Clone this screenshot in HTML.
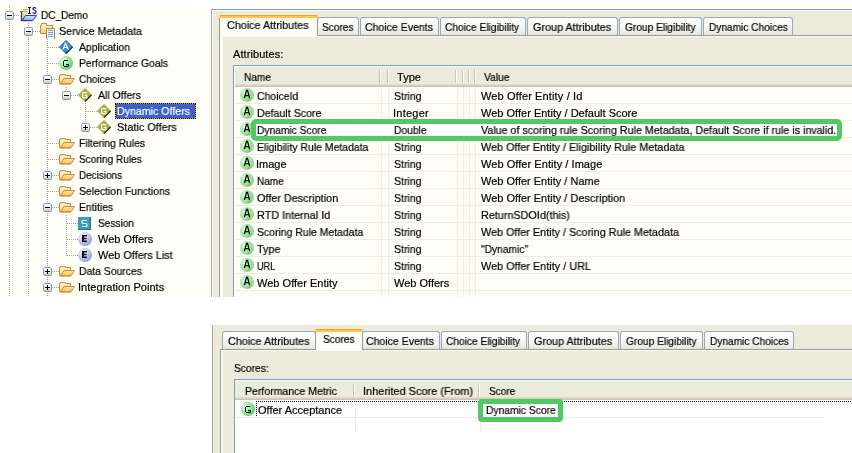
<!DOCTYPE html><html><head><meta charset="utf-8"><style>
html,body{margin:0;padding:0}
body{width:852px;height:453px;overflow:hidden;background:#fff;position:relative;font-family:"Liberation Sans",sans-serif;font-size:11px;color:#000}
.a{position:absolute}
.t{position:absolute;white-space:pre;line-height:13px;font-size:11px;will-change:transform;-webkit-text-stroke-width:0.2px}
svg.a{overflow:visible}
</style></head><body>
<div class="a" style="left:0px;top:4px;width:194px;height:293px;background:#FFFFF7;"></div>
<div class="a" style="left:194px;top:9px;width:17px;height:288px;background:#FFFFF7;"></div>
<div class="a" style="left:9px;top:5px;width:1px;height:292px;background:repeating-linear-gradient(to bottom,#A3A3A3 0 1px,transparent 1px 2px);"></div>
<div class="a" style="left:28px;top:23px;width:1px;height:274px;background:repeating-linear-gradient(to bottom,#A3A3A3 0 1px,transparent 1px 2px);"></div>
<div class="a" style="left:47px;top:39px;width:1px;height:258px;background:repeating-linear-gradient(to bottom,#A3A3A3 0 1px,transparent 1px 2px);"></div>
<div class="a" style="left:66px;top:87px;width:1px;height:9px;background:repeating-linear-gradient(to bottom,#A3A3A3 0 1px,transparent 1px 2px);"></div>
<div class="a" style="left:85px;top:103px;width:1px;height:25px;background:repeating-linear-gradient(to bottom,#A3A3A3 0 1px,transparent 1px 2px);"></div>
<div class="a" style="left:66px;top:215px;width:1px;height:41px;background:repeating-linear-gradient(to bottom,#A3A3A3 0 1px,transparent 1px 2px);"></div>
<div class="a" style="left:14px;top:15px;width:6px;height:1px;background:repeating-linear-gradient(to right,#A3A3A3 0 1px,transparent 1px 2px);"></div>
<div class="a" style="left:33px;top:31px;width:7px;height:1px;background:repeating-linear-gradient(to right,#A3A3A3 0 1px,transparent 1px 2px);"></div>
<div class="a" style="left:48px;top:47px;width:11px;height:1px;background:repeating-linear-gradient(to right,#A3A3A3 0 1px,transparent 1px 2px);"></div>
<div class="a" style="left:48px;top:63px;width:11px;height:1px;background:repeating-linear-gradient(to right,#A3A3A3 0 1px,transparent 1px 2px);"></div>
<div class="a" style="left:52px;top:79px;width:7px;height:1px;background:repeating-linear-gradient(to right,#A3A3A3 0 1px,transparent 1px 2px);"></div>
<div class="a" style="left:71px;top:95px;width:7px;height:1px;background:repeating-linear-gradient(to right,#A3A3A3 0 1px,transparent 1px 2px);"></div>
<div class="a" style="left:86px;top:111px;width:11px;height:1px;background:repeating-linear-gradient(to right,#A3A3A3 0 1px,transparent 1px 2px);"></div>
<div class="a" style="left:90px;top:127px;width:7px;height:1px;background:repeating-linear-gradient(to right,#A3A3A3 0 1px,transparent 1px 2px);"></div>
<div class="a" style="left:48px;top:143px;width:11px;height:1px;background:repeating-linear-gradient(to right,#A3A3A3 0 1px,transparent 1px 2px);"></div>
<div class="a" style="left:48px;top:159px;width:11px;height:1px;background:repeating-linear-gradient(to right,#A3A3A3 0 1px,transparent 1px 2px);"></div>
<div class="a" style="left:52px;top:175px;width:7px;height:1px;background:repeating-linear-gradient(to right,#A3A3A3 0 1px,transparent 1px 2px);"></div>
<div class="a" style="left:48px;top:191px;width:11px;height:1px;background:repeating-linear-gradient(to right,#A3A3A3 0 1px,transparent 1px 2px);"></div>
<div class="a" style="left:52px;top:207px;width:7px;height:1px;background:repeating-linear-gradient(to right,#A3A3A3 0 1px,transparent 1px 2px);"></div>
<div class="a" style="left:67px;top:223px;width:11px;height:1px;background:repeating-linear-gradient(to right,#A3A3A3 0 1px,transparent 1px 2px);"></div>
<div class="a" style="left:67px;top:239px;width:11px;height:1px;background:repeating-linear-gradient(to right,#A3A3A3 0 1px,transparent 1px 2px);"></div>
<div class="a" style="left:67px;top:255px;width:11px;height:1px;background:repeating-linear-gradient(to right,#A3A3A3 0 1px,transparent 1px 2px);"></div>
<div class="a" style="left:52px;top:271px;width:7px;height:1px;background:repeating-linear-gradient(to right,#A3A3A3 0 1px,transparent 1px 2px);"></div>
<div class="a" style="left:52px;top:287px;width:7px;height:1px;background:repeating-linear-gradient(to right,#A3A3A3 0 1px,transparent 1px 2px);"></div>
<svg class="a" style="left:5px;top:11px;" width="9" height="9" viewBox="0 0 9 9"><defs><linearGradient id="bgm" x1="0" y1="0" x2="0" y2="1"><stop offset="0" stop-color="#fff"/><stop offset="0.5" stop-color="#F6F4EE"/><stop offset="1" stop-color="#C6BDA2"/></linearGradient></defs><rect x="0.5" y="0.5" width="8" height="8" rx="1.2" fill="url(#bgm)" stroke="#7E9EBE"/><rect x="2" y="4" width="5" height="1" fill="#000"/></svg>
<svg class="a" style="left:19px;top:6px;" width="18" height="16" viewBox="0 0 18 16">
<defs><linearGradient id="isf" x1="0" y1="0" x2="0" y2="1"><stop offset="0" stop-color="#FFF2C8"/><stop offset="1" stop-color="#F4C65A"/></linearGradient>
<linearGradient id="isb" x1="0" y1="0" x2="0" y2="1"><stop offset="0" stop-color="#C8E8FF"/><stop offset="1" stop-color="#8CC0EE"/></linearGradient></defs>
<rect x="2" y="3" width="7" height="11" fill="url(#isf)"/>
<path d="M4 3.5h5M4 5.5h5" stroke="#E0A868" stroke-width="1"/>
<path d="M1 5.5h3" stroke="#8A6E8C" stroke-width="1"/>
<path d="M2.5 6v8.5h10" stroke="#2233AA" stroke-width="1.3" fill="none"/>
<path d="M3.5 14.2 L6.5 9.5 H17.5 L14 14.5z" fill="url(#isb)" stroke="#2A3CB0" stroke-width="1"/>
<path d="M9 1.5h3M10.5 1.5v6M9 7.5h3" stroke="#15158A" stroke-width="1.1" fill="none"/>
<path d="M17 2.6 C16.5 1.4 14 1.2 13.9 2.8 C13.8 4.4 17.2 4.0 17.1 5.9 C17 7.8 14 7.8 13.6 6.4" stroke="#15158A" stroke-width="1.2" fill="none"/>
</svg>
<div class="t" style="left:40.50px;top:9px;transform:scaleX(0.9135);transform-origin:0 0;">DC_Demo</div>
<svg class="a" style="left:24px;top:27px;" width="9" height="9" viewBox="0 0 9 9"><defs><linearGradient id="bgm" x1="0" y1="0" x2="0" y2="1"><stop offset="0" stop-color="#fff"/><stop offset="0.5" stop-color="#F6F4EE"/><stop offset="1" stop-color="#C6BDA2"/></linearGradient></defs><rect x="0.5" y="0.5" width="8" height="8" rx="1.2" fill="url(#bgm)" stroke="#7E9EBE"/><rect x="2" y="4" width="5" height="1" fill="#000"/></svg>
<svg class="a" style="left:39px;top:23px;" width="17" height="17" viewBox="0 0 17 17">
<defs><linearGradient id="fd" x1="0" y1="0" x2="0" y2="1"><stop offset="0" stop-color="#FFF6D6"/><stop offset="1" stop-color="#F8CA6A"/></linearGradient></defs>
<path d="M1.5 10.5 V2.5 H2.5 V0.5 H7.5 V2.5 H13.5 V10.5z" fill="url(#fd)" stroke="#CF8A2C" stroke-width="1"/>
<rect x="7" y="5" width="9" height="11" fill="#F2F7FF"/><path d="M7.5 16 V5.5 H15.5 V16" fill="none" stroke="#A28A3C"/>
<rect x="9" y="7" width="5" height="1" fill="#7A98D8"/>
<rect x="9" y="9" width="5" height="1" fill="#7A98D8"/>
<rect x="9" y="11" width="5" height="1" fill="#7A98D8"/>
<rect x="9" y="13" width="5" height="1" fill="#7A98D8"/>
</svg>
<div class="t" style="left:59.40px;top:25px;transform:scaleX(0.9690);transform-origin:0 0;">Service Metadata</div>
<svg class="a" style="left:59px;top:40px;" width="14" height="14" viewBox="0 0 14 14">
<path d="M7 0.5 L13.5 7 L7 13.5 L0.5 7z" fill="#3399BB" stroke="#1E3CB4" stroke-width="1"/>
<path d="M13.5 7 L7 13.5" stroke="#1A2A70" stroke-width="1.2"/>
<path d="M3.8 9.8 L6.5 3.2 L9.5 9.8 M5.2 7.5 H8" stroke="#fff" stroke-width="1.1" fill="none"/>
</svg>
<div class="t" style="left:79.10px;top:41px;transform:scaleX(0.9479);transform-origin:0 0;">Application</div>
<svg class="a" style="left:59px;top:56px;" width="14" height="14" viewBox="0 0 14 14">
<defs><radialGradient id="g3" cx="0.32" cy="0.35" r="0.8"><stop offset="0" stop-color="#F2FFF2"/><stop offset="0.35" stop-color="#A8F0AC"/><stop offset="1" stop-color="#46CC5A"/></radialGradient></defs>
<circle cx="7" cy="7" r="7" fill="url(#g3)"/>
<path d="M5 4.5H9M4.5 5V10M5 10.5H9M9.5 8V10.5M7 8.5H10" stroke="#000" stroke-width="1" fill="none"/>
</svg>
<div class="t" style="left:79.10px;top:57px;transform:scaleX(0.9395);transform-origin:0 0;">Performance Goals</div>
<svg class="a" style="left:43px;top:75px;" width="9" height="9" viewBox="0 0 9 9"><defs><linearGradient id="bgm" x1="0" y1="0" x2="0" y2="1"><stop offset="0" stop-color="#fff"/><stop offset="0.5" stop-color="#F6F4EE"/><stop offset="1" stop-color="#C6BDA2"/></linearGradient></defs><rect x="0.5" y="0.5" width="8" height="8" rx="1.2" fill="url(#bgm)" stroke="#7E9EBE"/><rect x="2" y="4" width="5" height="1" fill="#000"/></svg>
<svg class="a" style="left:59px;top:74px;" width="16" height="11" viewBox="0 0 16 11">
<defs><linearGradient id="of" x1="0" y1="0" x2="0" y2="1"><stop offset="0" stop-color="#FFF6D2"/><stop offset="1" stop-color="#F9CF74"/></linearGradient>
<linearGradient id="off" x1="0" y1="0" x2="0" y2="1"><stop offset="0" stop-color="#FFE9A8"/><stop offset="1" stop-color="#F6C25E"/></linearGradient></defs>
<path d="M0.5 9.5 V1.5 H1.5 V0.5 H6.5 V1.5 H11.5 V4.5" fill="url(#of)" stroke="#D08C34" stroke-width="1"/>
<rect x="1" y="2" width="10" height="8" fill="url(#of)"/>
<path d="M0.5 1.5 V9.5" stroke="#D08C34"/>
<path d="M1.5 9.8 L5 4.5 H15.5 L12 9.8z" fill="url(#off)" stroke="#D08C34" stroke-width="1"/>
<path d="M1 10 H12" stroke="#D08C34" stroke-width="1"/>
</svg>
<div class="t" style="left:78.50px;top:73px;transform:scaleX(0.9170);transform-origin:0 0;">Choices</div>
<svg class="a" style="left:62px;top:91px;" width="9" height="9" viewBox="0 0 9 9"><defs><linearGradient id="bgm" x1="0" y1="0" x2="0" y2="1"><stop offset="0" stop-color="#fff"/><stop offset="0.5" stop-color="#F6F4EE"/><stop offset="1" stop-color="#C6BDA2"/></linearGradient></defs><rect x="0.5" y="0.5" width="8" height="8" rx="1.2" fill="url(#bgm)" stroke="#7E9EBE"/><rect x="2" y="4" width="5" height="1" fill="#000"/></svg>
<svg class="a" style="left:78px;top:88px;" width="14" height="14" viewBox="0 0 14 14">
<path d="M7 0.5 L13.5 7 L7 13.5 L0.5 7z" fill="#B5AA3A" stroke="#66BB30" stroke-width="0.9"/>
<path d="M13.5 7 L7 13.5" stroke="#2E2E10" stroke-width="1.2"/>
<path d="M5 4.5h4.2M4.6 4.8v5M5 9.6h4.2M8.8 7.2v2.6M6.8 7.3h2.4" stroke="#fff" stroke-width="1.25" fill="none"/>
</svg>
<div class="t" style="left:98.20px;top:89px;transform:scaleX(0.9554);transform-origin:0 0;">All Offers</div>
<svg class="a" style="left:97px;top:104px;" width="14" height="14" viewBox="0 0 14 14">
<path d="M7 0.5 L13.5 7 L7 13.5 L0.5 7z" fill="#B5AA3A" stroke="#66BB30" stroke-width="0.9"/>
<path d="M13.5 7 L7 13.5" stroke="#2E2E10" stroke-width="1.2"/>
<path d="M5 4.5h4.2M4.6 4.8v5M5 9.6h4.2M8.8 7.2v2.6M6.8 7.3h2.4" stroke="#fff" stroke-width="1.25" fill="none"/>
</svg>
<div class="a" style="left:115px;top:103px;width:81px;height:16px;background:#F0A030;outline:1px dotted #000;outline-offset:-1px;"></div>
<div class="a" style="left:116px;top:104px;width:79px;height:14px;background:#3B62C8;"></div>
<div class="t" style="left:116.70px;top:105px;color:#fff;transform:scaleX(0.9659);transform-origin:0 0;">Dynamic Offers</div>
<svg class="a" style="left:81px;top:123px;" width="9" height="9" viewBox="0 0 9 9"><defs><linearGradient id="bgp" x1="0" y1="0" x2="0" y2="1"><stop offset="0" stop-color="#fff"/><stop offset="0.5" stop-color="#F6F4EE"/><stop offset="1" stop-color="#C6BDA2"/></linearGradient></defs><rect x="0.5" y="0.5" width="8" height="8" rx="1.2" fill="url(#bgp)" stroke="#7E9EBE"/><rect x="2" y="4" width="5" height="1" fill="#000"/><rect x="4" y="2" width="1" height="5" fill="#000"/></svg>
<svg class="a" style="left:97px;top:120px;" width="14" height="14" viewBox="0 0 14 14">
<path d="M7 0.5 L13.5 7 L7 13.5 L0.5 7z" fill="#B5AA3A" stroke="#66BB30" stroke-width="0.9"/>
<path d="M13.5 7 L7 13.5" stroke="#2E2E10" stroke-width="1.2"/>
<path d="M5 4.5h4.2M4.6 4.8v5M5 9.6h4.2M8.8 7.2v2.6M6.8 7.3h2.4" stroke="#fff" stroke-width="1.25" fill="none"/>
</svg>
<div class="t" style="left:116.70px;top:121px;transform:scaleX(0.9915);transform-origin:0 0;">Static Offers</div>
<svg class="a" style="left:59px;top:138px;" width="16" height="11" viewBox="0 0 16 11">
<defs><linearGradient id="of" x1="0" y1="0" x2="0" y2="1"><stop offset="0" stop-color="#FFF6D2"/><stop offset="1" stop-color="#F9CF74"/></linearGradient>
<linearGradient id="off" x1="0" y1="0" x2="0" y2="1"><stop offset="0" stop-color="#FFE9A8"/><stop offset="1" stop-color="#F6C25E"/></linearGradient></defs>
<path d="M0.5 9.5 V1.5 H1.5 V0.5 H6.5 V1.5 H11.5 V4.5" fill="url(#of)" stroke="#D08C34" stroke-width="1"/>
<rect x="1" y="2" width="10" height="8" fill="url(#of)"/>
<path d="M0.5 1.5 V9.5" stroke="#D08C34"/>
<path d="M1.5 9.8 L5 4.5 H15.5 L12 9.8z" fill="url(#off)" stroke="#D08C34" stroke-width="1"/>
<path d="M1 10 H12" stroke="#D08C34" stroke-width="1"/>
</svg>
<div class="t" style="left:78.50px;top:137px;transform:scaleX(0.9392);transform-origin:0 0;">Filtering Rules</div>
<svg class="a" style="left:59px;top:154px;" width="16" height="11" viewBox="0 0 16 11">
<defs><linearGradient id="of" x1="0" y1="0" x2="0" y2="1"><stop offset="0" stop-color="#FFF6D2"/><stop offset="1" stop-color="#F9CF74"/></linearGradient>
<linearGradient id="off" x1="0" y1="0" x2="0" y2="1"><stop offset="0" stop-color="#FFE9A8"/><stop offset="1" stop-color="#F6C25E"/></linearGradient></defs>
<path d="M0.5 9.5 V1.5 H1.5 V0.5 H6.5 V1.5 H11.5 V4.5" fill="url(#of)" stroke="#D08C34" stroke-width="1"/>
<rect x="1" y="2" width="10" height="8" fill="url(#of)"/>
<path d="M0.5 1.5 V9.5" stroke="#D08C34"/>
<path d="M1.5 9.8 L5 4.5 H15.5 L12 9.8z" fill="url(#off)" stroke="#D08C34" stroke-width="1"/>
<path d="M1 10 H12" stroke="#D08C34" stroke-width="1"/>
</svg>
<div class="t" style="left:78.50px;top:153px;transform:scaleX(0.9163);transform-origin:0 0;">Scoring Rules</div>
<svg class="a" style="left:43px;top:171px;" width="9" height="9" viewBox="0 0 9 9"><defs><linearGradient id="bgp" x1="0" y1="0" x2="0" y2="1"><stop offset="0" stop-color="#fff"/><stop offset="0.5" stop-color="#F6F4EE"/><stop offset="1" stop-color="#C6BDA2"/></linearGradient></defs><rect x="0.5" y="0.5" width="8" height="8" rx="1.2" fill="url(#bgp)" stroke="#7E9EBE"/><rect x="2" y="4" width="5" height="1" fill="#000"/><rect x="4" y="2" width="1" height="5" fill="#000"/></svg>
<svg class="a" style="left:59px;top:170px;" width="16" height="11" viewBox="0 0 16 11">
<defs><linearGradient id="of" x1="0" y1="0" x2="0" y2="1"><stop offset="0" stop-color="#FFF6D2"/><stop offset="1" stop-color="#F9CF74"/></linearGradient>
<linearGradient id="off" x1="0" y1="0" x2="0" y2="1"><stop offset="0" stop-color="#FFE9A8"/><stop offset="1" stop-color="#F6C25E"/></linearGradient></defs>
<path d="M0.5 9.5 V1.5 H1.5 V0.5 H6.5 V1.5 H11.5 V4.5" fill="url(#of)" stroke="#D08C34" stroke-width="1"/>
<rect x="1" y="2" width="10" height="8" fill="url(#of)"/>
<path d="M0.5 1.5 V9.5" stroke="#D08C34"/>
<path d="M1.5 9.8 L5 4.5 H15.5 L12 9.8z" fill="url(#off)" stroke="#D08C34" stroke-width="1"/>
<path d="M1 10 H12" stroke="#D08C34" stroke-width="1"/>
</svg>
<div class="t" style="left:78.50px;top:169px;transform:scaleX(0.9028);transform-origin:0 0;">Decisions</div>
<svg class="a" style="left:59px;top:186px;" width="16" height="11" viewBox="0 0 16 11">
<defs><linearGradient id="of" x1="0" y1="0" x2="0" y2="1"><stop offset="0" stop-color="#FFF6D2"/><stop offset="1" stop-color="#F9CF74"/></linearGradient>
<linearGradient id="off" x1="0" y1="0" x2="0" y2="1"><stop offset="0" stop-color="#FFE9A8"/><stop offset="1" stop-color="#F6C25E"/></linearGradient></defs>
<path d="M0.5 9.5 V1.5 H1.5 V0.5 H6.5 V1.5 H11.5 V4.5" fill="url(#of)" stroke="#D08C34" stroke-width="1"/>
<rect x="1" y="2" width="10" height="8" fill="url(#of)"/>
<path d="M0.5 1.5 V9.5" stroke="#D08C34"/>
<path d="M1.5 9.8 L5 4.5 H15.5 L12 9.8z" fill="url(#off)" stroke="#D08C34" stroke-width="1"/>
<path d="M1 10 H12" stroke="#D08C34" stroke-width="1"/>
</svg>
<div class="t" style="left:78.50px;top:185px;transform:scaleX(0.9482);transform-origin:0 0;">Selection Functions</div>
<svg class="a" style="left:43px;top:203px;" width="9" height="9" viewBox="0 0 9 9"><defs><linearGradient id="bgm" x1="0" y1="0" x2="0" y2="1"><stop offset="0" stop-color="#fff"/><stop offset="0.5" stop-color="#F6F4EE"/><stop offset="1" stop-color="#C6BDA2"/></linearGradient></defs><rect x="0.5" y="0.5" width="8" height="8" rx="1.2" fill="url(#bgm)" stroke="#7E9EBE"/><rect x="2" y="4" width="5" height="1" fill="#000"/></svg>
<svg class="a" style="left:59px;top:202px;" width="16" height="11" viewBox="0 0 16 11">
<defs><linearGradient id="of" x1="0" y1="0" x2="0" y2="1"><stop offset="0" stop-color="#FFF6D2"/><stop offset="1" stop-color="#F9CF74"/></linearGradient>
<linearGradient id="off" x1="0" y1="0" x2="0" y2="1"><stop offset="0" stop-color="#FFE9A8"/><stop offset="1" stop-color="#F6C25E"/></linearGradient></defs>
<path d="M0.5 9.5 V1.5 H1.5 V0.5 H6.5 V1.5 H11.5 V4.5" fill="url(#of)" stroke="#D08C34" stroke-width="1"/>
<rect x="1" y="2" width="10" height="8" fill="url(#of)"/>
<path d="M0.5 1.5 V9.5" stroke="#D08C34"/>
<path d="M1.5 9.8 L5 4.5 H15.5 L12 9.8z" fill="url(#off)" stroke="#D08C34" stroke-width="1"/>
<path d="M1 10 H12" stroke="#D08C34" stroke-width="1"/>
</svg>
<div class="t" style="left:78.60px;top:201px;transform:scaleX(0.9461);transform-origin:0 0;">Entities</div>
<svg class="a" style="left:78px;top:217px;" width="13" height="13" viewBox="0 0 13 13">
<rect x="0" y="0" width="13" height="13" fill="#3A9BBA"/>
<path d="M12.5 0 V12.5 H0" stroke="#2A6E8E" stroke-width="1" fill="none"/>
<path d="M9 3.5 H5 Q4 3.5 4 4.5 V5.5 Q4 6.5 5 6.5 H8 Q9 6.5 9 7.5 V8.5 Q9 9.5 8 9.5 H4" stroke="#fff" stroke-width="1.1" fill="none"/>
</svg>
<div class="t" style="left:97.60px;top:217px;transform:scaleX(0.9176);transform-origin:0 0;">Session</div>
<svg class="a" style="left:78px;top:232px;" width="14" height="14" viewBox="0 0 14 14">
<defs><radialGradient id="e14" cx="0.35" cy="0.3" r="0.8"><stop offset="0" stop-color="#F4F6FF"/><stop offset="0.5" stop-color="#C4CAF2"/><stop offset="1" stop-color="#8890D6"/></radialGradient></defs>
<circle cx="7" cy="7" r="7" fill="url(#e14)"/>
<rect x="4" y="3" width="2" height="7" fill="#000"/><rect x="4" y="3" width="5" height="1.4" fill="#000"/><rect x="4" y="5.9" width="4.6" height="1.3" fill="#000"/><rect x="4" y="8.6" width="5" height="1.4" fill="#000"/>
</svg>
<div class="t" style="left:97.60px;top:233px;transform:scaleX(0.9995);transform-origin:0 0;">Web Offers</div>
<svg class="a" style="left:78px;top:248px;" width="14" height="14" viewBox="0 0 14 14">
<defs><radialGradient id="e15" cx="0.35" cy="0.3" r="0.8"><stop offset="0" stop-color="#F4F6FF"/><stop offset="0.5" stop-color="#C4CAF2"/><stop offset="1" stop-color="#8890D6"/></radialGradient></defs>
<circle cx="7" cy="7" r="7" fill="url(#e15)"/>
<rect x="4" y="3" width="2" height="7" fill="#000"/><rect x="4" y="3" width="5" height="1.4" fill="#000"/><rect x="4" y="5.9" width="4.6" height="1.3" fill="#000"/><rect x="4" y="8.6" width="5" height="1.4" fill="#000"/>
</svg>
<div class="t" style="left:97.60px;top:249px;transform:scaleX(0.9915);transform-origin:0 0;">Web Offers List</div>
<svg class="a" style="left:43px;top:267px;" width="9" height="9" viewBox="0 0 9 9"><defs><linearGradient id="bgp" x1="0" y1="0" x2="0" y2="1"><stop offset="0" stop-color="#fff"/><stop offset="0.5" stop-color="#F6F4EE"/><stop offset="1" stop-color="#C6BDA2"/></linearGradient></defs><rect x="0.5" y="0.5" width="8" height="8" rx="1.2" fill="url(#bgp)" stroke="#7E9EBE"/><rect x="2" y="4" width="5" height="1" fill="#000"/><rect x="4" y="2" width="1" height="5" fill="#000"/></svg>
<svg class="a" style="left:59px;top:266px;" width="16" height="11" viewBox="0 0 16 11">
<defs><linearGradient id="of" x1="0" y1="0" x2="0" y2="1"><stop offset="0" stop-color="#FFF6D2"/><stop offset="1" stop-color="#F9CF74"/></linearGradient>
<linearGradient id="off" x1="0" y1="0" x2="0" y2="1"><stop offset="0" stop-color="#FFE9A8"/><stop offset="1" stop-color="#F6C25E"/></linearGradient></defs>
<path d="M0.5 9.5 V1.5 H1.5 V0.5 H6.5 V1.5 H11.5 V4.5" fill="url(#of)" stroke="#D08C34" stroke-width="1"/>
<rect x="1" y="2" width="10" height="8" fill="url(#of)"/>
<path d="M0.5 1.5 V9.5" stroke="#D08C34"/>
<path d="M1.5 9.8 L5 4.5 H15.5 L12 9.8z" fill="url(#off)" stroke="#D08C34" stroke-width="1"/>
<path d="M1 10 H12" stroke="#D08C34" stroke-width="1"/>
</svg>
<div class="t" style="left:78.60px;top:265px;transform:scaleX(0.9442);transform-origin:0 0;">Data Sources</div>
<svg class="a" style="left:43px;top:283px;" width="9" height="9" viewBox="0 0 9 9"><defs><linearGradient id="bgp" x1="0" y1="0" x2="0" y2="1"><stop offset="0" stop-color="#fff"/><stop offset="0.5" stop-color="#F6F4EE"/><stop offset="1" stop-color="#C6BDA2"/></linearGradient></defs><rect x="0.5" y="0.5" width="8" height="8" rx="1.2" fill="url(#bgp)" stroke="#7E9EBE"/><rect x="2" y="4" width="5" height="1" fill="#000"/><rect x="4" y="2" width="1" height="5" fill="#000"/></svg>
<svg class="a" style="left:59px;top:282px;" width="16" height="11" viewBox="0 0 16 11">
<defs><linearGradient id="of" x1="0" y1="0" x2="0" y2="1"><stop offset="0" stop-color="#FFF6D2"/><stop offset="1" stop-color="#F9CF74"/></linearGradient>
<linearGradient id="off" x1="0" y1="0" x2="0" y2="1"><stop offset="0" stop-color="#FFE9A8"/><stop offset="1" stop-color="#F6C25E"/></linearGradient></defs>
<path d="M0.5 9.5 V1.5 H1.5 V0.5 H6.5 V1.5 H11.5 V4.5" fill="url(#of)" stroke="#D08C34" stroke-width="1"/>
<rect x="1" y="2" width="10" height="8" fill="url(#of)"/>
<path d="M0.5 1.5 V9.5" stroke="#D08C34"/>
<path d="M1.5 9.8 L5 4.5 H15.5 L12 9.8z" fill="url(#off)" stroke="#D08C34" stroke-width="1"/>
<path d="M1 10 H12" stroke="#D08C34" stroke-width="1"/>
</svg>
<div class="t" style="left:77.60px;top:281px;letter-spacing:0.035px;">Integration Points</div>
<div class="a" style="left:262px;top:4px;width:590px;height:5px;background:#FFFFF4;"></div>
<div class="a" style="left:211px;top:9px;width:641px;height:1px;background:#7F9DB9;"></div>
<div class="a" style="left:211px;top:9px;width:1px;height:288px;background:#A5A597;"></div>
<div class="a" style="left:212px;top:10px;width:640px;height:287px;background:#fff;"></div>
<div class="a" style="left:213px;top:11px;width:639px;height:286px;background:#ECEBDB;"></div>
<div class="a" style="left:219px;top:35px;width:633px;height:1px;background:#919B9C;"></div>
<div class="a" style="left:219px;top:35px;width:1px;height:262px;background:#919B9C;"></div>
<div class="a" style="left:220px;top:36px;width:632px;height:261px;background:#FCFCF6;"></div>
<div class="a" style="left:317px;top:17px;width:40px;height:17px;border:1px solid #98A8BA;border-bottom:none;border-radius:3px 3px 0 0;background:linear-gradient(#FFFFFF,#F5F5F0 60%,#E6E5DC);"></div>
<div class="t" style="left:321.50px;top:21px;transform:scaleX(0.9213);transform-origin:0 0;">Scores</div>
<div class="a" style="left:360px;top:17px;width:77px;height:17px;border:1px solid #98A8BA;border-bottom:none;border-radius:3px 3px 0 0;background:linear-gradient(#FFFFFF,#F5F5F0 60%,#E6E5DC);"></div>
<div class="t" style="left:365.10px;top:21px;transform:scaleX(0.9576);transform-origin:0 0;">Choice Events</div>
<div class="a" style="left:440px;top:17px;width:84px;height:17px;border:1px solid #98A8BA;border-bottom:none;border-radius:3px 3px 0 0;background:linear-gradient(#FFFFFF,#F5F5F0 60%,#E6E5DC);"></div>
<div class="t" style="left:445.30px;top:21px;transform:scaleX(0.9257);transform-origin:0 0;">Choice Eligibility</div>
<div class="a" style="left:527px;top:17px;width:89px;height:17px;border:1px solid #98A8BA;border-bottom:none;border-radius:3px 3px 0 0;background:linear-gradient(#FFFFFF,#F5F5F0 60%,#E6E5DC);"></div>
<div class="t" style="left:533.00px;top:21px;transform:scaleX(0.9827);transform-origin:0 0;">Group Attributes</div>
<div class="a" style="left:619px;top:17px;width:81px;height:17px;border:1px solid #98A8BA;border-bottom:none;border-radius:3px 3px 0 0;background:linear-gradient(#FFFFFF,#F5F5F0 60%,#E6E5DC);"></div>
<div class="t" style="left:624.60px;top:21px;transform:scaleX(0.9230);transform-origin:0 0;">Group Eligibility</div>
<div class="a" style="left:703px;top:17px;width:88px;height:17px;border:1px solid #98A8BA;border-bottom:none;border-radius:3px 3px 0 0;background:linear-gradient(#FFFFFF,#F5F5F0 60%,#E6E5DC);"></div>
<div class="t" style="left:708.70px;top:21px;transform:scaleX(0.9212);transform-origin:0 0;">Dynamic Choices</div>
<div class="a" style="left:219px;top:18px;width:97px;height:18px;border:1px solid #919B9C;border-top:none;border-bottom:none;background:#FCFCF6;"></div>
<div class="a" style="left:219px;top:15px;width:99px;height:3px;background:linear-gradient(#E68B2C,#FFC73C 50%,#FFC73C);border-radius:2px 2px 0 0;"></div>
<div class="t" style="left:226.50px;top:19px;transform:scaleX(0.9803);transform-origin:0 0;">Choice Attributes</div>
<div class="a" style="left:223px;top:37px;width:629px;height:260px;background:#ECEBDB;"></div>
<div class="t" style="left:233.10px;top:48px;letter-spacing:0.083px;">Attributes:</div>
<div class="a" style="left:233px;top:65px;width:619px;height:1px;background:#7F9DB9;"></div>
<div class="a" style="left:233px;top:65px;width:1px;height:232px;background:#7F9DB9;"></div>
<div class="a" style="left:234px;top:66px;width:618px;height:231px;background:#fff;"></div>
<div class="a" style="left:235px;top:67px;width:617px;height:17px;background:#EBEBDC;"></div>
<div class="a" style="left:235px;top:84px;width:617px;height:1px;background:#E4DBCC;"></div>
<div class="a" style="left:235px;top:85px;width:617px;height:1px;background:#D7CFC5;"></div>
<div class="a" style="left:235px;top:86px;width:617px;height:1px;background:#CAC2B6;"></div>
<div class="a" style="left:235px;top:87px;width:617px;height:210px;background:#FEFEF6;"></div>
<div class="a" style="left:379px;top:70px;width:1px;height:13px;background:#C7C5B2;"></div>
<div class="a" style="left:380px;top:70px;width:1px;height:13px;background:#FFFFFF;"></div>
<div class="a" style="left:387px;top:70px;width:1px;height:13px;background:#C7C5B2;"></div>
<div class="a" style="left:388px;top:70px;width:1px;height:13px;background:#FFFFFF;"></div>
<div class="a" style="left:455px;top:70px;width:1px;height:13px;background:#C7C5B2;"></div>
<div class="a" style="left:456px;top:70px;width:1px;height:13px;background:#FFFFFF;"></div>
<div class="a" style="left:462px;top:70px;width:1px;height:13px;background:#C7C5B2;"></div>
<div class="a" style="left:463px;top:70px;width:1px;height:13px;background:#FFFFFF;"></div>
<div class="a" style="left:468px;top:70px;width:1px;height:13px;background:#C7C5B2;"></div>
<div class="a" style="left:469px;top:70px;width:1px;height:13px;background:#FFFFFF;"></div>
<div class="a" style="left:474px;top:70px;width:1px;height:13px;background:#C7C5B2;"></div>
<div class="a" style="left:475px;top:70px;width:1px;height:13px;background:#FFFFFF;"></div>
<div class="t" style="left:243.60px;top:71px;transform:scaleX(0.9170);transform-origin:0 0;">Name</div>
<div class="t" style="left:397.20px;top:71px;letter-spacing:0.023px;">Type</div>
<div class="t" style="left:483.70px;top:71px;transform:scaleX(0.9338);transform-origin:0 0;">Value</div>
<div class="a" style="left:235px;top:103px;width:617px;height:1px;background:#EFEDE0;"></div>
<div class="a" style="left:235px;top:120px;width:617px;height:1px;background:#EFEDE0;"></div>
<div class="a" style="left:235px;top:137px;width:617px;height:1px;background:#EFEDE0;"></div>
<div class="a" style="left:235px;top:154px;width:617px;height:1px;background:#EFEDE0;"></div>
<div class="a" style="left:235px;top:171px;width:617px;height:1px;background:#EFEDE0;"></div>
<div class="a" style="left:235px;top:188px;width:617px;height:1px;background:#EFEDE0;"></div>
<div class="a" style="left:235px;top:205px;width:617px;height:1px;background:#EFEDE0;"></div>
<div class="a" style="left:235px;top:222px;width:617px;height:1px;background:#EFEDE0;"></div>
<div class="a" style="left:235px;top:239px;width:617px;height:1px;background:#EFEDE0;"></div>
<div class="a" style="left:235px;top:256px;width:617px;height:1px;background:#EFEDE0;"></div>
<div class="a" style="left:235px;top:273px;width:617px;height:1px;background:#EFEDE0;"></div>
<div class="a" style="left:235px;top:290px;width:617px;height:1px;background:#EFEDE0;"></div>
<div class="a" style="left:381px;top:87px;width:1px;height:210px;background:#EFEDE0;"></div>
<div class="a" style="left:388px;top:87px;width:1px;height:210px;background:#EFEDE0;"></div>
<div class="a" style="left:457px;top:87px;width:1px;height:210px;background:#EFEDE0;"></div>
<div class="a" style="left:463px;top:87px;width:1px;height:210px;background:#EFEDE0;"></div>
<div class="a" style="left:469px;top:87px;width:1px;height:210px;background:#EFEDE0;"></div>
<div class="a" style="left:475px;top:87px;width:1px;height:210px;background:#EFEDE0;"></div>
<svg class="a" style="left:240px;top:88px;" width="14" height="14" viewBox="0 0 14 14">
<defs><radialGradient id="a0" cx="0.35" cy="0.35" r="0.8"><stop offset="0" stop-color="#E8FFE8"/><stop offset="0.4" stop-color="#A6EAA8"/><stop offset="1" stop-color="#78D47E"/></radialGradient></defs>
<circle cx="7" cy="7" r="7" fill="url(#a0)"/>
<path d="M10.5 10.5 A5 5 0 0 1 7.5 12.5" stroke="#9AAA40" stroke-width="1.2" fill="none"/>
<path d="M4.4 10 L6.5 2.4 H7.5 L9.6 10 M5.4 7.6 H8.6" stroke="#000" stroke-width="1.25" fill="none"/>
</svg>
<svg class="a" style="left:240px;top:105px;" width="14" height="14" viewBox="0 0 14 14">
<defs><radialGradient id="a1" cx="0.35" cy="0.35" r="0.8"><stop offset="0" stop-color="#E8FFE8"/><stop offset="0.4" stop-color="#A6EAA8"/><stop offset="1" stop-color="#78D47E"/></radialGradient></defs>
<circle cx="7" cy="7" r="7" fill="url(#a1)"/>
<path d="M10.5 10.5 A5 5 0 0 1 7.5 12.5" stroke="#9AAA40" stroke-width="1.2" fill="none"/>
<path d="M4.4 10 L6.5 2.4 H7.5 L9.6 10 M5.4 7.6 H8.6" stroke="#000" stroke-width="1.25" fill="none"/>
</svg>
<svg class="a" style="left:240px;top:122px;" width="14" height="14" viewBox="0 0 14 14">
<defs><radialGradient id="a2" cx="0.35" cy="0.35" r="0.8"><stop offset="0" stop-color="#E8FFE8"/><stop offset="0.4" stop-color="#A6EAA8"/><stop offset="1" stop-color="#78D47E"/></radialGradient></defs>
<circle cx="7" cy="7" r="7" fill="url(#a2)"/>
<path d="M10.5 10.5 A5 5 0 0 1 7.5 12.5" stroke="#9AAA40" stroke-width="1.2" fill="none"/>
<path d="M4.4 10 L6.5 2.4 H7.5 L9.6 10 M5.4 7.6 H8.6" stroke="#000" stroke-width="1.25" fill="none"/>
</svg>
<svg class="a" style="left:240px;top:139px;" width="14" height="14" viewBox="0 0 14 14">
<defs><radialGradient id="a3" cx="0.35" cy="0.35" r="0.8"><stop offset="0" stop-color="#E8FFE8"/><stop offset="0.4" stop-color="#A6EAA8"/><stop offset="1" stop-color="#78D47E"/></radialGradient></defs>
<circle cx="7" cy="7" r="7" fill="url(#a3)"/>
<path d="M10.5 10.5 A5 5 0 0 1 7.5 12.5" stroke="#9AAA40" stroke-width="1.2" fill="none"/>
<path d="M4.4 10 L6.5 2.4 H7.5 L9.6 10 M5.4 7.6 H8.6" stroke="#000" stroke-width="1.25" fill="none"/>
</svg>
<svg class="a" style="left:240px;top:156px;" width="14" height="14" viewBox="0 0 14 14">
<defs><radialGradient id="a4" cx="0.35" cy="0.35" r="0.8"><stop offset="0" stop-color="#E8FFE8"/><stop offset="0.4" stop-color="#A6EAA8"/><stop offset="1" stop-color="#78D47E"/></radialGradient></defs>
<circle cx="7" cy="7" r="7" fill="url(#a4)"/>
<path d="M10.5 10.5 A5 5 0 0 1 7.5 12.5" stroke="#9AAA40" stroke-width="1.2" fill="none"/>
<path d="M4.4 10 L6.5 2.4 H7.5 L9.6 10 M5.4 7.6 H8.6" stroke="#000" stroke-width="1.25" fill="none"/>
</svg>
<svg class="a" style="left:240px;top:173px;" width="14" height="14" viewBox="0 0 14 14">
<defs><radialGradient id="a5" cx="0.35" cy="0.35" r="0.8"><stop offset="0" stop-color="#E8FFE8"/><stop offset="0.4" stop-color="#A6EAA8"/><stop offset="1" stop-color="#78D47E"/></radialGradient></defs>
<circle cx="7" cy="7" r="7" fill="url(#a5)"/>
<path d="M10.5 10.5 A5 5 0 0 1 7.5 12.5" stroke="#9AAA40" stroke-width="1.2" fill="none"/>
<path d="M4.4 10 L6.5 2.4 H7.5 L9.6 10 M5.4 7.6 H8.6" stroke="#000" stroke-width="1.25" fill="none"/>
</svg>
<svg class="a" style="left:240px;top:190px;" width="14" height="14" viewBox="0 0 14 14">
<defs><radialGradient id="a6" cx="0.35" cy="0.35" r="0.8"><stop offset="0" stop-color="#E8FFE8"/><stop offset="0.4" stop-color="#A6EAA8"/><stop offset="1" stop-color="#78D47E"/></radialGradient></defs>
<circle cx="7" cy="7" r="7" fill="url(#a6)"/>
<path d="M10.5 10.5 A5 5 0 0 1 7.5 12.5" stroke="#9AAA40" stroke-width="1.2" fill="none"/>
<path d="M4.4 10 L6.5 2.4 H7.5 L9.6 10 M5.4 7.6 H8.6" stroke="#000" stroke-width="1.25" fill="none"/>
</svg>
<svg class="a" style="left:240px;top:207px;" width="14" height="14" viewBox="0 0 14 14">
<defs><radialGradient id="a7" cx="0.35" cy="0.35" r="0.8"><stop offset="0" stop-color="#E8FFE8"/><stop offset="0.4" stop-color="#A6EAA8"/><stop offset="1" stop-color="#78D47E"/></radialGradient></defs>
<circle cx="7" cy="7" r="7" fill="url(#a7)"/>
<path d="M10.5 10.5 A5 5 0 0 1 7.5 12.5" stroke="#9AAA40" stroke-width="1.2" fill="none"/>
<path d="M4.4 10 L6.5 2.4 H7.5 L9.6 10 M5.4 7.6 H8.6" stroke="#000" stroke-width="1.25" fill="none"/>
</svg>
<svg class="a" style="left:240px;top:224px;" width="14" height="14" viewBox="0 0 14 14">
<defs><radialGradient id="a8" cx="0.35" cy="0.35" r="0.8"><stop offset="0" stop-color="#E8FFE8"/><stop offset="0.4" stop-color="#A6EAA8"/><stop offset="1" stop-color="#78D47E"/></radialGradient></defs>
<circle cx="7" cy="7" r="7" fill="url(#a8)"/>
<path d="M10.5 10.5 A5 5 0 0 1 7.5 12.5" stroke="#9AAA40" stroke-width="1.2" fill="none"/>
<path d="M4.4 10 L6.5 2.4 H7.5 L9.6 10 M5.4 7.6 H8.6" stroke="#000" stroke-width="1.25" fill="none"/>
</svg>
<svg class="a" style="left:240px;top:241px;" width="14" height="14" viewBox="0 0 14 14">
<defs><radialGradient id="a9" cx="0.35" cy="0.35" r="0.8"><stop offset="0" stop-color="#E8FFE8"/><stop offset="0.4" stop-color="#A6EAA8"/><stop offset="1" stop-color="#78D47E"/></radialGradient></defs>
<circle cx="7" cy="7" r="7" fill="url(#a9)"/>
<path d="M10.5 10.5 A5 5 0 0 1 7.5 12.5" stroke="#9AAA40" stroke-width="1.2" fill="none"/>
<path d="M4.4 10 L6.5 2.4 H7.5 L9.6 10 M5.4 7.6 H8.6" stroke="#000" stroke-width="1.25" fill="none"/>
</svg>
<svg class="a" style="left:240px;top:258px;" width="14" height="14" viewBox="0 0 14 14">
<defs><radialGradient id="a10" cx="0.35" cy="0.35" r="0.8"><stop offset="0" stop-color="#E8FFE8"/><stop offset="0.4" stop-color="#A6EAA8"/><stop offset="1" stop-color="#78D47E"/></radialGradient></defs>
<circle cx="7" cy="7" r="7" fill="url(#a10)"/>
<path d="M10.5 10.5 A5 5 0 0 1 7.5 12.5" stroke="#9AAA40" stroke-width="1.2" fill="none"/>
<path d="M4.4 10 L6.5 2.4 H7.5 L9.6 10 M5.4 7.6 H8.6" stroke="#000" stroke-width="1.25" fill="none"/>
</svg>
<svg class="a" style="left:240px;top:275px;" width="14" height="14" viewBox="0 0 14 14">
<defs><radialGradient id="a11" cx="0.35" cy="0.35" r="0.8"><stop offset="0" stop-color="#E8FFE8"/><stop offset="0.4" stop-color="#A6EAA8"/><stop offset="1" stop-color="#78D47E"/></radialGradient></defs>
<circle cx="7" cy="7" r="7" fill="url(#a11)"/>
<path d="M10.5 10.5 A5 5 0 0 1 7.5 12.5" stroke="#9AAA40" stroke-width="1.2" fill="none"/>
<path d="M4.4 10 L6.5 2.4 H7.5 L9.6 10 M5.4 7.6 H8.6" stroke="#000" stroke-width="1.25" fill="none"/>
</svg>
<div class="a" style="left:251px;top:119px;width:581px;height:12px;border:5px solid #52C866;border-radius:5px;background:#fff"></div>
<div class="t" style="left:256.70px;top:90px;transform:scaleX(0.9516);transform-origin:0 0;">ChoiceId</div>
<div class="t" style="left:393.70px;top:90px;transform:scaleX(0.9609);transform-origin:0 0;">String</div>
<div class="t" style="left:480.90px;top:90px;letter-spacing:0.134px;">Web Offer Entity / Id</div>
<div class="t" style="left:256.70px;top:107px;transform:scaleX(0.9680);transform-origin:0 0;">Default Score</div>
<div class="t" style="left:392.70px;top:107px;letter-spacing:0.253px;">Integer</div>
<div class="t" style="left:480.90px;top:107px;letter-spacing:0.010px;">Web Offer Entity / Default Score</div>
<div class="t" style="left:256.70px;top:124px;transform:scaleX(0.9307);transform-origin:0 0;">Dynamic Score</div>
<div class="t" style="left:393.70px;top:124px;transform:scaleX(0.9355);transform-origin:0 0;">Double</div>
<div class="t" style="left:480.90px;top:124px;transform:scaleX(0.9722);transform-origin:0 0;">Value of scoring rule Scoring Rule Metadata, Default Score if rule is invalid.</div>
<div class="t" style="left:256.70px;top:141px;transform:scaleX(0.9487);transform-origin:0 0;">Eligibility Rule Metadata</div>
<div class="t" style="left:393.70px;top:141px;transform:scaleX(0.9609);transform-origin:0 0;">String</div>
<div class="t" style="left:480.90px;top:141px;transform:scaleX(0.9835);transform-origin:0 0;">Web Offer Entity / Eligibility Rule Metadata</div>
<div class="t" style="left:255.70px;top:158px;letter-spacing:0.011px;">Image</div>
<div class="t" style="left:393.70px;top:158px;transform:scaleX(0.9609);transform-origin:0 0;">String</div>
<div class="t" style="left:480.90px;top:158px;letter-spacing:0.056px;">Web Offer Entity / Image</div>
<div class="t" style="left:256.70px;top:175px;transform:scaleX(0.9102);transform-origin:0 0;">Name</div>
<div class="t" style="left:393.70px;top:175px;transform:scaleX(0.9609);transform-origin:0 0;">String</div>
<div class="t" style="left:480.90px;top:175px;transform:scaleX(0.9984);transform-origin:0 0;">Web Offer Entity / Name</div>
<div class="t" style="left:256.70px;top:192px;transform:scaleX(0.9865);transform-origin:0 0;">Offer Description</div>
<div class="t" style="left:393.70px;top:192px;transform:scaleX(0.9609);transform-origin:0 0;">String</div>
<div class="t" style="left:480.90px;top:192px;transform:scaleX(0.9982);transform-origin:0 0;">Web Offer Entity / Description</div>
<div class="t" style="left:256.70px;top:209px;transform:scaleX(0.9843);transform-origin:0 0;">RTD Internal Id</div>
<div class="t" style="left:393.70px;top:209px;transform:scaleX(0.9609);transform-origin:0 0;">String</div>
<div class="t" style="left:480.90px;top:209px;transform:scaleX(0.9821);transform-origin:0 0;">ReturnSDOId(this)</div>
<div class="t" style="left:256.70px;top:226px;transform:scaleX(0.9497);transform-origin:0 0;">Scoring Rule Metadata</div>
<div class="t" style="left:393.70px;top:226px;transform:scaleX(0.9609);transform-origin:0 0;">String</div>
<div class="t" style="left:480.90px;top:226px;transform:scaleX(0.9835);transform-origin:0 0;">Web Offer Entity / Scoring Rule Metadata</div>
<div class="t" style="left:256.70px;top:243px;transform:scaleX(0.9819);transform-origin:0 0;">Type</div>
<div class="t" style="left:393.70px;top:243px;transform:scaleX(0.9609);transform-origin:0 0;">String</div>
<div class="t" style="left:480.90px;top:243px;transform:scaleX(0.9311);transform-origin:0 0;">&quot;Dynamic&quot;</div>
<div class="t" style="left:256.70px;top:260px;transform:scaleX(0.8224);transform-origin:0 0;">URL</div>
<div class="t" style="left:393.70px;top:260px;transform:scaleX(0.9609);transform-origin:0 0;">String</div>
<div class="t" style="left:480.90px;top:260px;transform:scaleX(0.9861);transform-origin:0 0;">Web Offer Entity / URL</div>
<div class="t" style="left:256.70px;top:277px;letter-spacing:0.021px;">Web Offer Entity</div>
<div class="t" style="left:393.70px;top:277px;transform:scaleX(0.9995);transform-origin:0 0;">Web Offers</div>
<div class="a" style="left:212px;top:325px;width:1px;height:128px;background:#A5A597;"></div>
<div class="a" style="left:213px;top:325px;width:639px;height:128px;background:#ECEBDB;"></div>
<div class="a" style="left:220px;top:349px;width:632px;height:1px;background:#919B9C;"></div>
<div class="a" style="left:220px;top:349px;width:1px;height:104px;background:#919B9C;"></div>
<div class="a" style="left:221px;top:350px;width:631px;height:103px;background:#FCFCF6;"></div>
<div class="a" style="left:222px;top:331px;width:92px;height:17px;border:1px solid #98A8BA;border-bottom:none;border-radius:3px 3px 0 0;background:linear-gradient(#FFFFFF,#F5F5F0 60%,#E6E5DC);"></div>
<div class="t" style="left:227.60px;top:335px;transform:scaleX(0.9803);transform-origin:0 0;">Choice Attributes</div>
<div class="a" style="left:362px;top:331px;width:76px;height:17px;border:1px solid #98A8BA;border-bottom:none;border-radius:3px 3px 0 0;background:linear-gradient(#FFFFFF,#F5F5F0 60%,#E6E5DC);"></div>
<div class="t" style="left:366.10px;top:335px;transform:scaleX(0.9576);transform-origin:0 0;">Choice Events</div>
<div class="a" style="left:441px;top:331px;width:84px;height:17px;border:1px solid #98A8BA;border-bottom:none;border-radius:3px 3px 0 0;background:linear-gradient(#FFFFFF,#F5F5F0 60%,#E6E5DC);"></div>
<div class="t" style="left:446.30px;top:335px;transform:scaleX(0.9257);transform-origin:0 0;">Choice Eligibility</div>
<div class="a" style="left:528px;top:331px;width:89px;height:17px;border:1px solid #98A8BA;border-bottom:none;border-radius:3px 3px 0 0;background:linear-gradient(#FFFFFF,#F5F5F0 60%,#E6E5DC);"></div>
<div class="t" style="left:534.00px;top:335px;transform:scaleX(0.9827);transform-origin:0 0;">Group Attributes</div>
<div class="a" style="left:620px;top:331px;width:81px;height:17px;border:1px solid #98A8BA;border-bottom:none;border-radius:3px 3px 0 0;background:linear-gradient(#FFFFFF,#F5F5F0 60%,#E6E5DC);"></div>
<div class="t" style="left:625.60px;top:335px;transform:scaleX(0.9230);transform-origin:0 0;">Group Eligibility</div>
<div class="a" style="left:704px;top:331px;width:88px;height:17px;border:1px solid #98A8BA;border-bottom:none;border-radius:3px 3px 0 0;background:linear-gradient(#FFFFFF,#F5F5F0 60%,#E6E5DC);"></div>
<div class="t" style="left:709.70px;top:335px;transform:scaleX(0.9212);transform-origin:0 0;">Dynamic Choices</div>
<div class="a" style="left:315px;top:332px;width:46px;height:18px;border:1px solid #919B9C;border-top:none;border-bottom:none;background:#FCFCF6;"></div>
<div class="a" style="left:315px;top:329px;width:48px;height:3px;background:linear-gradient(#E68B2C,#FFC73C 50%,#FFC73C);border-radius:2px 2px 0 0;"></div>
<div class="t" style="left:323.00px;top:333px;transform:scaleX(0.9213);transform-origin:0 0;">Scores</div>
<div class="a" style="left:223px;top:351px;width:629px;height:102px;background:#ECEBDB;"></div>
<div class="t" style="left:233.90px;top:362px;transform:scaleX(0.9319);transform-origin:0 0;">Scores:</div>
<div class="a" style="left:234px;top:379px;width:618px;height:1px;background:#7F9DB9;"></div>
<div class="a" style="left:234px;top:379px;width:1px;height:74px;background:#7F9DB9;"></div>
<div class="a" style="left:235px;top:380px;width:617px;height:73px;background:#fff;"></div>
<div class="a" style="left:235px;top:381px;width:617px;height:16px;background:#EBEBDC;"></div>
<div class="a" style="left:235px;top:397px;width:617px;height:1px;background:#E4DBCC;"></div>
<div class="a" style="left:235px;top:398px;width:617px;height:1px;background:#D7CFC5;"></div>
<div class="a" style="left:235px;top:399px;width:617px;height:1px;background:#CAC2B6;"></div>
<div class="a" style="left:353px;top:384px;width:1px;height:13px;background:#C7C5B2;"></div>
<div class="a" style="left:354px;top:384px;width:1px;height:13px;background:#fff;"></div>
<div class="a" style="left:478px;top:384px;width:1px;height:13px;background:#C7C5B2;"></div>
<div class="a" style="left:479px;top:384px;width:1px;height:13px;background:#fff;"></div>
<div class="t" style="left:244.70px;top:385px;transform:scaleX(0.9578);transform-origin:0 0;">Performance Metric</div>
<div class="t" style="left:363.01px;top:385px;transform:scaleX(0.9947);transform-origin:0 0;">Inherited Score (From)</div>
<div class="t" style="left:488.80px;top:385px;transform:scaleX(0.9155);transform-origin:0 0;">Score</div>
<div class="a" style="left:235px;top:417px;width:588px;height:1px;background:#EFEDE0;"></div>
<div class="a" style="left:355px;top:400px;width:1px;height:33px;background:#EFEDE0;"></div>
<div class="a" style="left:480px;top:400px;width:1px;height:33px;background:#EFEDE0;"></div>
<div class="a" style="left:256px;top:401px;width:596px;height:1px;background:repeating-linear-gradient(to right,#000 0 1px,transparent 1px 2px);"></div>
<div class="a" style="left:256px;top:401px;width:1px;height:16px;background:repeating-linear-gradient(to bottom,#000 0 1px,transparent 1px 2px);"></div>
<svg class="a" style="left:241px;top:402px;" width="14" height="14" viewBox="0 0 14 14">
<defs><radialGradient id="gb" cx="0.32" cy="0.35" r="0.8"><stop offset="0" stop-color="#F2FFF2"/><stop offset="0.35" stop-color="#A8F0AC"/><stop offset="1" stop-color="#46CC5A"/></radialGradient></defs>
<circle cx="7" cy="7" r="7" fill="url(#gb)"/>
<path d="M5 4.5H9M4.5 5V10M5 10.5H9M9.5 8V10.5M7 8.5H10" stroke="#000" stroke-width="1" fill="none"/>
</svg>
<div class="t" style="left:257.70px;top:404px;transform:scaleX(0.9992);transform-origin:0 0;">Offer Acceptance</div>
<div class="a" style="left:478px;top:399px;width:75px;height:13px;border:5px solid #52C866;border-radius:4px;background:#fff"></div>
<div class="t" style="left:485.60px;top:404px;transform:scaleX(0.9347);transform-origin:0 0;">Dynamic Score</div>
</body></html>
